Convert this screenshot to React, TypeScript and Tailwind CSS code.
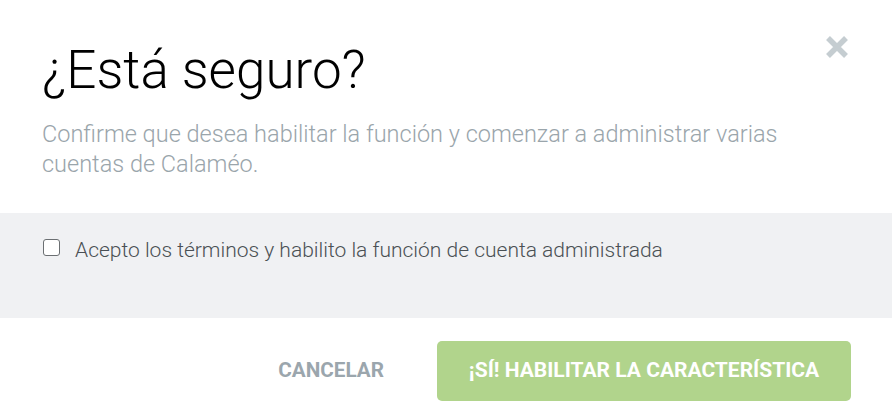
export default function App() {
  return (
    <div className="w-[892px] h-[420px] bg-white font-['Roboto',sans-serif] flex flex-col overflow-hidden">
      <div className="relative px-[42px] pt-[40px] h-[213px]">
        <h1 className="text-[53px] leading-[60px] font-light text-black">¿Está seguro?</h1>
        <p className="mt-[19px] max-w-[780px] text-[23.5px] leading-[30px] font-light text-[#9aa5ab]">
          Confirme que desea habilitar la función y comenzar a administrar varias cuentas de Calaméo.
        </p>
        <button className="absolute top-[35px] right-[43px] w-[24px] h-[24px] text-[#c5cdd1]">
          <svg viewBox="0 0 24 24" className="w-full h-full">
            <path d="M3 3 L21 21 M21 3 L3 21" stroke="currentColor" strokeWidth="5.5" strokeLinecap="butt" />
          </svg>
        </button>
      </div>
      <div className="bg-[#f0f1f3] h-[105px] px-[43px] pt-[25px]">
        <label className="flex items-start gap-[15px] text-[21px] leading-[24px] font-light text-[#4a5054]">
          <span className="mt-[1px] w-[17px] h-[17px] border-[1.5px] border-[#6b6f72] rounded-[3px] bg-white shrink-0" />
          Acepto los términos y habilito la función de cuenta administrada
        </label>
      </div>
      <div className="flex items-center justify-end gap-[53px] pr-[41px] pt-[23px]">
        <button className="text-[20.7px] font-bold text-[#9ba6ad] uppercase">Cancelar</button>
        <button className="w-[414px] h-[60px] rounded-[5px] bg-[#b1d48c] text-white text-[21px] font-bold uppercase">
          ¡Sí! Habilitar la característica
        </button>
      </div>
    </div>
  );
}
